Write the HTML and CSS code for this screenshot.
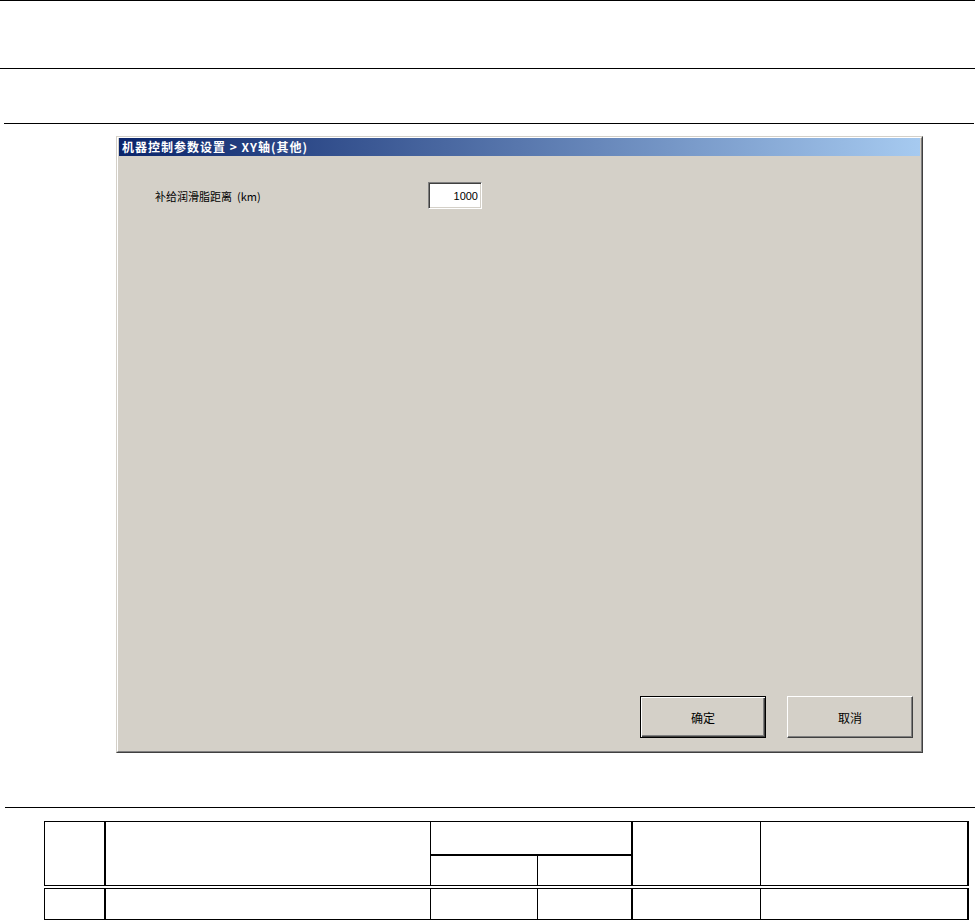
FILE: index.html
```html
<!DOCTYPE html>
<html lang="zh-CN">
    <head>
        <meta charset="UTF-8" />
        <meta name="viewport" content="width=device-width, initial-scale=1.0" />
        <title>机器控制参数设置</title>
        <link rel="stylesheet" href="styles.css">
    </head>
    <body>
        <div class="page">
            <div class="rule rule-top"></div>
            <div class="rule rule-second"></div>
            <div class="rule rule-third"></div>

            <div class="dialog">
                <div class="frame">
                    <div class="titlebar">机器控制参数设置 &gt; XY轴(其他)</div>
                    <div class="dialog-body">
                        <div class="field">
                            <label class="field-label" for="grease">补给润滑脂距离&nbsp; (km)</label>
                            <input class="field-input" id="grease" type="text" value="1000">
                        </div>
                        <div class="buttons">
                            <button class="btn btn-default">确定</button>
                            <button class="btn">取消</button>
                        </div>
                    </div>
                </div>
            </div>

            <div class="rule rule-fourth"></div>

            <table class="grid">
                <colgroup>
                    <col class="c1">
                    <col class="c2">
                    <col class="c3">
                    <col class="c4">
                    <col class="c5">
                    <col class="c6">
                </colgroup>
                <thead>
                    <tr class="head-top">
                        <th rowspan="2" class="thick-r"></th>
                        <th rowspan="2"></th>
                        <th colspan="2" class="thick-b thick-r"></th>
                        <th rowspan="2"></th>
                        <th rowspan="2" class="thick-r"></th>
                    </tr>
                    <tr class="head-sub">
                        <th></th>
                        <th class="thick-r"></th>
                    </tr>
                </thead>
                <tbody>
                    <tr class="row">
                        <td class="thick-r"></td>
                        <td></td>
                        <td></td>
                        <td class="thick-r"></td>
                        <td></td>
                        <td class="thick-r"></td>
                    </tr>
                </tbody>
            </table>
        </div>
    </body>
</html>
```

FILE: styles.css
```css
html {
    font-family: 'Noto Sans CJK SC', 'Liberation Sans', sans-serif;
}
body {
    margin: 0;
    background: #fff;
}
.page {
    width: 979px;
    height: 923px;
    overflow: hidden;
}
.rule {
    height: 1px;
    background: #000;
}
.rule-top {
    width: 975px;
}
.rule-second {
    width: 975px;
    margin-top: 67px;
}
.rule-third {
    width: 970px;
    margin-top: 54px;
    margin-left: 4px;
}
.rule-fourth {
    width: 970px;
    margin-top: 54px;
    margin-left: 5px;
}

/* dialog window */
.dialog {
    width: 805px;
    height: 615px;
    margin: 12px 0 0 116px;
    border: 1px solid;
    border-color: #d4d0c8 #404040 #404040 #d4d0c8;
    background: #d4d0c8;
}
.frame {
    height: 613px;
    border: 1px solid;
    border-color: #fff #808080 #808080 #fff;
    display: flex;
    flex-direction: column;
}
.titlebar {
    height: 18px;
    margin: 0 1px;
    padding-left: 3px;
    background: linear-gradient(to right, #0a246a, #a6caf0);
    color: #fff;
    font-size: 12px;
    font-weight: bold;
    letter-spacing: 1px;
    line-height: 18px;
    white-space: nowrap;
}
.dialog-body {
    flex: 1;
    display: flex;
    flex-direction: column;
    padding: 26px 8px 13px 37px;
}
.field {
    display: flex;
    align-items: center;
}
.field-label {
    width: 273px;
    font-size: 11px;
    color: #000;
    white-space: pre;
}
.field-input {
    box-sizing: border-box;
    width: 54px;
    height: 27px;
    padding: 0 3px;
    border: 1px solid;
    border-color: #808080 #fff #fff #808080;
    box-shadow: inset 1px 1px 0 #404040, inset -1px -1px 0 #d4d0c8;
    background: #fff;
    text-align: right;
    font-family: 'Liberation Sans', sans-serif;
    font-size: 11px;
    color: #000;
}
.buttons {
    margin-top: auto;
    display: flex;
    justify-content: flex-end;
    gap: 21px;
}
.btn {
    box-sizing: border-box;
    width: 126px;
    height: 42px;
    border: 1px solid;
    border-color: #fff #404040 #404040 #fff;
    background: #d4d0c8;
    font-family: inherit;
    font-size: 12px;
    color: #000;
    box-shadow: inset -1px -1px 0 #808080;
}
.btn-default {
    border-color: #000;
    box-shadow: inset 1px 1px 0 #fff, inset -1px -1px 0 #404040, inset -2px -2px 0 #808080;
}

/* bottom table */
.grid {
    margin: 13px 0 0 44px;
    border-collapse: collapse;
    table-layout: fixed;
    width: 924px;
}
.grid th,
.grid td {
    border: 1px solid #000;
    padding: 0;
}
.c1 { width: 60px; }
.c2 { width: 326px; }
.c3 { width: 107px; }
.c4 { width: 94px; }
.c5 { width: 129px; }
.c6 { width: 207px; }
.head-top {
    height: 33px;
}
.head-sub {
    height: 32px;
}
.row {
    height: 33px;
}
.grid thead th {
    border-bottom: 4px double #000;
}
.grid .thick-b {
    border-bottom: 2px solid #000;
}
.grid .thick-r {
    border-right: 2px solid #000;
}
```
